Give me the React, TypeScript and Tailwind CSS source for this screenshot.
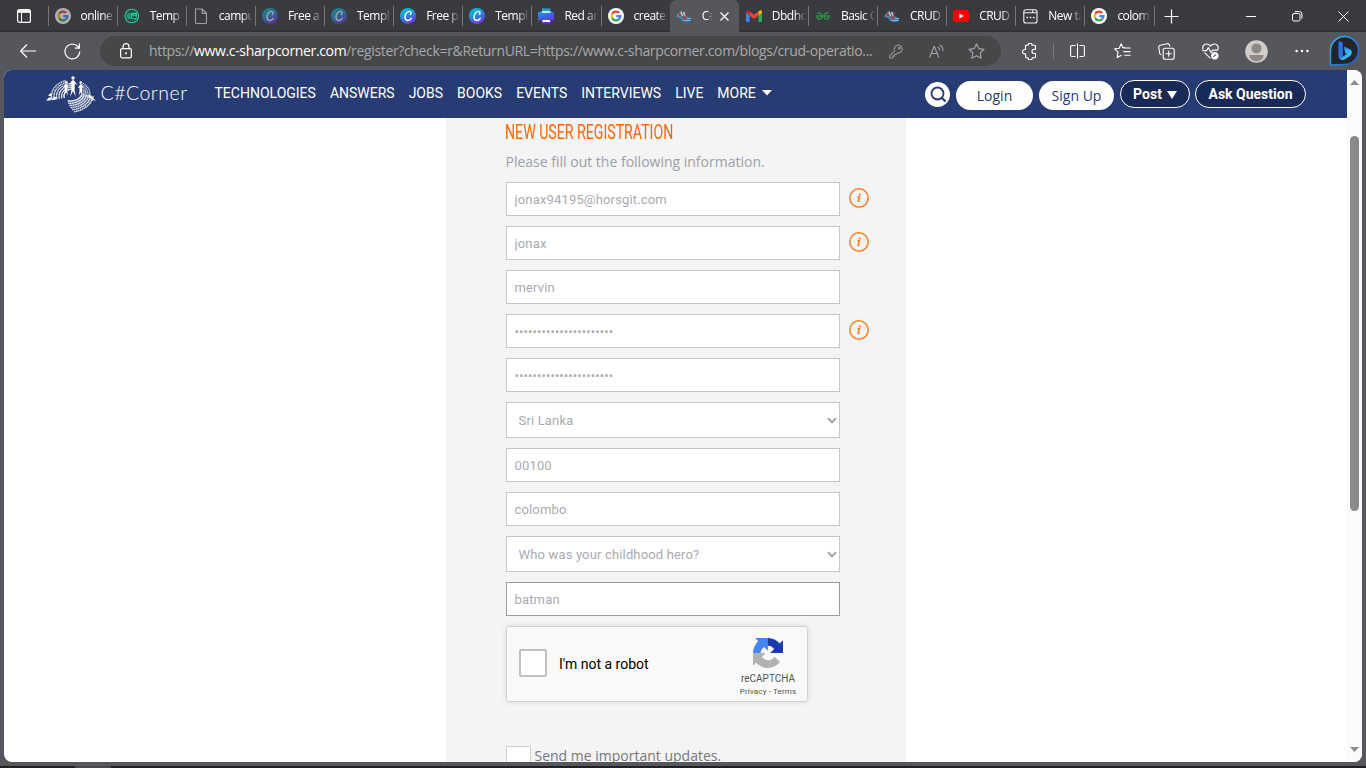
import React from "react";

const UI = "font-['Open_Sans','Noto_Sans',sans-serif]";

function GoogleIcon({ dim = false }: { dim?: boolean }) {
  return (
    <svg width="16" height="16" viewBox="0 0 16 16" className={dim ? "opacity-60" : ""}>
      <circle cx="8" cy="8" r="8" fill="#fff" />
      <g fill="none" strokeWidth="2.3">
        <path d="M11.2 4.9A4.4 4.4 0 0 0 4.2 5.8" stroke="#ea4335" />
        <path d="M4.2 5.8A4.4 4.4 0 0 0 4.2 10.2" stroke="#fbbc05" />
        <path d="M4.2 10.2A4.4 4.4 0 0 0 10.8 11.4" stroke="#34a853" />
        <path d="M10.8 11.4A4.4 4.4 0 0 0 12.4 8.2H8.2" stroke="#4285f4" />
      </g>
    </svg>
  );
}

function TempIcon() {
  return (
    <svg width="17" height="16" viewBox="0 0 17 16" fill="none" stroke="#1fd3a0" strokeWidth="1.2">
      <circle cx="8.3" cy="8" r="7.2" fill="#2a4a48" />
      <path d="M3.500 6h3.500M2.500 8h4.200M3.500 10h3.500M8.200 5.200h5v3.300M8 10.600V5.400l2.600 2.600 2.600-2.600M8 10.600h2M11 12l2.600-2.600" />
    </svg>
  );
}

function FileIcon() {
  return (
    <svg width="16" height="17" viewBox="0 0 16 17" fill="none" stroke="#a0a0a2" strokeWidth="1.1">
      <path d="M2.5 1h6.8l4.2 4.3v9.2q0 1-1 1h-9q-1 0-1-1zM9.2 1v4.4h4.3" />
    </svg>
  );
}

function CanvaIcon({ dim = false }: { dim?: boolean }) {
  return (
    <svg width="16" height="16" viewBox="0 0 16 16" className={dim ? "opacity-55" : ""}>
      <defs>
        <linearGradient id="canva" x1="0.2" y1="0" x2="0.7" y2="1">
          <stop offset="0" stopColor="#00c9d2" />
          <stop offset="0.5" stopColor="#2a86e0" />
          <stop offset="1" stopColor="#7a2be6" />
        </linearGradient>
      </defs>
      <circle cx="8" cy="8" r="8" fill="url(#canva)" />
      <path d="M10.400 6.400c1.100-1 .9-3.100-1-3-2.600.2-4.400 3.100-4.400 5.700 0 2.300 1.100 3.400 2.600 3.400 1.600 0 2.900-1 3.600-2.200" fill="none" stroke="#fff" strokeWidth="1.400" strokeLinecap="round" />
    </svg>
  );
}

function PrinterIcon() {
  return (
    <svg width="16" height="16" viewBox="0 0 16 16">
      <defs>
        <linearGradient id="printer" x1="0" y1="0" x2="0.3" y2="1">
          <stop offset="0" stopColor="#06c4d4" />
          <stop offset="0.55" stopColor="#2f6fe4" />
          <stop offset="1" stopColor="#7a2be6" />
        </linearGradient>
      </defs>
      <path d="M4 0.500h8.500v3h1.500q2 0 2 2v6q0 1-1 1h-2v3h-9v-3h-3q-1 0-1-1v-6q0-2 2-2h2z" fill="url(#printer)" />
      <path d="M4 3.300h8.500v1.500h-8.500zM4.500 12h7.500v2h-7.500z" fill="#fff" />
    </svg>
  );
}

function SharpIcon() {
  return (
    <svg width="16" height="14" viewBox="0 0 16 14">
      <path d="M0 7.500 2.500 4l3-2.500 1 2.500 2-1.500 2 1 .5 4-5 2.500z" fill="#7f9ab2" opacity=".75" />
      <path d="M3.500 7.500 6 7l5 .5 4.500 2-1 3-4 .8-5-1.800z" fill="#3f7fb0" />
      <path d="M3 4.500l1.500 2.500M9.500 3.500l1 3.500" stroke="#a3303a" strokeWidth="1.600" />
      <path d="M5 3l1.500 4M7.500 3 9 6.500" stroke="#b8cbdc" strokeWidth="1.100" />
      <path d="M7 7.500l3 2.500" stroke="#c9302c" strokeWidth="2" />
      <path d="M7 11.500h7M11 9.500h4" stroke="#86bbdf" strokeWidth=".8" />
    </svg>
  );
}

function GmailIcon() {
  return (
    <svg width="16" height="12" viewBox="0 0 16 12">
      <path d="M1 12q-1 0-1-1V2l3.600 2.700V12z" fill="#4285f4" />
      <path d="M15 12q1 0 1-1V2l-3.600 2.700V12z" fill="#34a853" />
      <path d="M0 2.500V1.800Q.3 0 2.200.400L3.600 1.400v4z" fill="#c5221f" />
      <path d="M16 2.500v-.700Q15.700 0 13.800.400l-1.400 1v4z" fill="#fbbc04" />
      <path d="M3.400 1.200 8 4.700l4.600-3.500v4.300L8 9 3.400 5.500z" fill="#ea4335" />
    </svg>
  );
}

function GeeksIcon() {
  return (
    <svg width="14" height="8" viewBox="0 0 14 8" fill="none" stroke="#2f8d46" strokeWidth="1.500">
      <path d="M1.500 1.300Q5.700 0 6 4M0 4h14M6 4Q5.900 7.200 3.400 7.200 1.200 7.200 1 4.200M12.500 1.300Q8.300 0 8 4M8 4Q8.100 7.200 10.600 7.200 12.800 7.200 13 4.200" />
    </svg>
  );
}

function YoutubeIcon() {
  return (
    <svg width="16" height="12" viewBox="0 0 16 12">
      <rect width="16" height="12" rx="3" fill="#f00" />
      <path d="M6.300 3.400v5.200L10.800 6z" fill="#fff" />
    </svg>
  );
}

function NewTabIcon() {
  return (
    <svg width="15" height="15" viewBox="0 0 15 15" fill="none" stroke="#f2f2f2" strokeWidth="1.100">
      <path d="M.8 3.800h7.700q1 0 1.200-1l.3-1.800M.8 12V3q0-2.200 2.200-2.200h8.800q2.200 0 2.200 2.200v9q0 2-2 2h-9.200q-2 0-2-2zM9.500 3.800h4.500" />
      <path d="M3.500 8.500h1.600M6.700 8.500h1.600M9.900 8.500h1.600" strokeWidth="1.600" />
    </svg>
  );
}

const tabs: { label: string; icon: React.ReactNode; active?: boolean }[] = [
  { label: "online", icon: <GoogleIcon dim /> },
  { label: "Temp", icon: <TempIcon /> },
  { label: "campu", icon: <FileIcon /> },
  { label: "Free a", icon: <CanvaIcon dim /> },
  { label: "Templ", icon: <CanvaIcon dim /> },
  { label: "Free p", icon: <CanvaIcon /> },
  { label: "Templ", icon: <CanvaIcon /> },
  { label: "Red an", icon: <PrinterIcon /> },
  { label: "create", icon: <GoogleIcon /> },
  { label: "C#", icon: <SharpIcon />, active: true },
  { label: "Dbdho", icon: <GmailIcon /> },
  { label: "Basic C", icon: <GeeksIcon /> },
  { label: "CRUD", icon: <SharpIcon /> },
  { label: "CRUD", icon: <YoutubeIcon /> },
  { label: "New ta", icon: <NewTabIcon /> },
  { label: "colom", icon: <GoogleIcon /> },
];

function TabStrip() {
  return (
    <div className="flex h-8 bg-[#3a3b3e] text-white shadow-[inset_0_-2px_2px_-1px_#2c2d30]">
      <div className="flex w-[47.500px] shrink-0 items-center pl-[17px]">
        <svg width="14" height="14" viewBox="0 0 14 14" fill="none" stroke="#fff">
          <rect x=".6" y=".6" width="12.800" height="12.800" rx="2" strokeWidth="1.200" />
          <path d="M1 2.500h12" strokeWidth="2.600" />
          <path d="M4.500 3v10" strokeWidth="1" />
        </svg>
      </div>
      <div className="grid w-[1106px] shrink-0 grid-cols-16">
        {tabs.map((t, i) => (
          <div key={i} className={t.active ? "flex items-center rounded-t-md bg-[#56575c] pl-[6px]" : "flex items-center"}>
            {!t.active && <div className={tabs[i - 1]?.active ? "h-5 w-px shrink-0" : "h-5 w-px shrink-0 bg-[#76777a]"} />}
            <div className={t.active ? "flex w-4 shrink-0 justify-center" : "ml-[6px] flex w-4 shrink-0 justify-center"}>{t.icon}</div>
            <div
              className={
                t.active
                  ? "ml-[10px] w-[10px] overflow-hidden whitespace-nowrap text-[12px] leading-4 [mask-image:linear-gradient(to_right,black_55%,transparent)]"
                  : "ml-[10px] w-[34px] overflow-hidden whitespace-nowrap text-[12px] leading-4 tracking-[-0.5px] [mask-image:linear-gradient(to_right,black_65%,transparent)]"
              }
            >
              {t.label}
            </div>
            {t.active && (
              <svg className="ml-2" width="9" height="9" viewBox="0 0 9 9" stroke="#fff" strokeWidth="1.200">
                <path d="M.5.5l8 8M8.500.5l-8 8" />
              </svg>
            )}
          </div>
        ))}
      </div>
      <div className="flex flex-1 items-center">
        <div className="h-5 w-px bg-[#76777a]" />
        <svg className="ml-[9.500px]" width="15" height="15" viewBox="0 0 15 15" stroke="#fff" strokeWidth="1.200">
          <path d="M7.500.5v14M.5 7.500h14" />
        </svg>
        <svg className="ml-[67px]" width="11" height="11" viewBox="0 0 11 11" stroke="#fff">
          <path d="M0 5.500h10" />
        </svg>
        <svg className="ml-[35px]" width="11" height="11" viewBox="0 0 11 11" fill="none" stroke="#fff">
          <rect x=".5" y="2.500" width="7.500" height="7.500" rx="1.500" />
          <path d="M2.800.6h4.700q2.400 0 2.400 2.400v4.700" />
        </svg>
        <svg className="ml-[35px]" width="11" height="11" viewBox="0 0 11 11" stroke="#fff">
          <path d="M.5.5l10 10M10.500.5l-10 10" />
        </svg>
      </div>
    </div>
  );
}

function BingIcon() {
  return (
    <svg width="31" height="32" viewBox="0 0 31 32">
      <defs>
        <linearGradient id="ring" x1="0" y1="0" x2="1" y2="1">
          <stop offset="0" stopColor="#35b8f2" />
          <stop offset="1" stopColor="#1855d6" />
        </linearGradient>
        <linearGradient id="bing" x1="0" y1="0" x2="1" y2="1">
          <stop offset="0" stopColor="#2d7df0" />
          <stop offset="1" stopColor="#42d3f2" />
        </linearGradient>
      </defs>
      <path d="M1.500 30V15.500A14 14 0 1 1 15.500 29.500Q9 29.500 1.500 30z" fill="#242527" stroke="url(#ring)" strokeWidth="1.600" />
      <path d="M9.500 6 13.800 7.600v13.500l-.5 3.900q-3.800-.6-3.800-4z" fill="#2a71ea" />
      <path d="M15 11.500l6.200 3q2.300 1.600 1.300 4.300-.5 1.500-2 2.500l-4.800 3.200q-2.900 1.300-4.700-.7l6.500-4.800-1.500-1.500z" fill="url(#bing)" />
    </svg>
  );
}

function Toolbar() {
  return (
    <div className="flex h-[38px] items-center bg-[#56575c] text-white">
      <svg className="ml-5 shrink-0" width="16" height="14" viewBox="0 0 16 14" fill="none" stroke="#fff" strokeWidth="1.200">
        <path d="M7 .5.7 7 7 13.500M.7 7H16" />
      </svg>
      <svg className="ml-7 shrink-0" width="17" height="17" viewBox="0 0 17 17" fill="none" stroke="#fff" strokeWidth="1.200">
        <path d="M15.800 8.500A7.400 7.400 0 1 1 13 2.700l2 2M15.400.5v4.600h-4.600" />
      </svg>
      <div className="ml-[19px] flex h-[30px] w-[901px] shrink-0 items-center rounded-full bg-[#464749] text-[#a8a9ab]">
        <svg className="ml-[20px] shrink-0" width="12" height="16" viewBox="0 0 12 16" fill="none" stroke="#fff" strokeWidth="1.200">
          <rect x=".6" y="5.600" width="10.800" height="9.200" rx="1.500" />
          <path d="M3 5.500V3.600a3 3 0 0 1 6 0v1.900" />
          <circle cx="6" cy="10.200" r="1" fill="#fff" stroke="none" />
        </svg>
        <div className="ml-[17px] w-[740px] whitespace-nowrap text-[14px] leading-5">
          <span className="tracking-[-0.345px]">
            https://<span className="text-white">www.c-sharpcorner.com</span>/register?check=r&amp;ReturnURL=https://www.c-sharpcorner.com/blogs/crud-operatio...
          </span>
        </div>
        <svg className="shrink-0" width="14" height="15" viewBox="0 0 14 15" fill="none" stroke="#929395" strokeWidth="1.100">
          <path d="M5.600 6.800A4 4 0 1 1 8.400 9L7 10.400H5.500v1.700H3.700V14H.8v-2.400z" />
          <circle cx="10.300" cy="4.200" r=".9" />
        </svg>
        <svg className="ml-[26px] shrink-0" width="16" height="15" viewBox="0 0 16 15" fill="none" stroke="#a6a7a9" strokeWidth="1.100">
          <path d="M.6 13.500 5 2.500h.4l4.400 11M2.200 9.500h6M8.800 3q2 1.200 1.700 3.500M10.800 1q3.600 2 3 6" />
        </svg>
        <svg className="ml-[23px] shrink-0" width="17" height="16" viewBox="0 0 17 16" fill="none" stroke="#a6a7a9" strokeWidth="1.100" strokeLinejoin="round">
          <path d="m8.500.9 2.300 4.700 5.200.8-3.800 3.600.9 5.200-4.600-2.400-4.600 2.400.9-5.200L1 6.400l5.200-.8z" />
        </svg>
      </div>
      <svg className="ml-[21px] shrink-0" width="15" height="17" viewBox="0 0 15 17" fill="none" stroke="#fff" strokeWidth="1.100" strokeLinejoin="round">
        <path d="M3.500 2.200h2.600a2 2 0 0 1 4 0h2.400q1 0 1 1v3h-1.400a2.100 2.100 0 0 0 0 4.300h1.400v3.200q0 1-1 1h-2.200a2.100 2.100 0 0 1-4.300 0H4.600q-1 0-1-1v-2.800H2.700a2.100 2.100 0 0 1 0-4.400h.8z" />
      </svg>
      <div className="ml-[16px] h-4 w-px shrink-0 bg-[#77787b]" />
      <svg className="ml-[16px] shrink-0" width="15" height="16" viewBox="0 0 15 16" fill="none" stroke="#fff" strokeWidth="1.100">
        <path d="M7.500.5v15M5.500 2.500H2q-1.400 0-1.400 1.400v8.200q0 1.400 1.400 1.400h3.500M9.500 2.500H13q1.400 0 1.400 1.400v8.200q0 1.400-1.400 1.400H9.500" />
      </svg>
      <svg className="ml-[29px] shrink-0" width="17" height="16" viewBox="0 0 17 16" fill="none" stroke="#fff" strokeWidth="1.100" strokeLinejoin="round">
        <path d="M10.600 4.500 8.800 4.600 7.200.8 5.200 5.200.7 5.800l3.300 3.300-.8 5.400 4.300-2.200M9.800 5h6.700M9.200 8.600h7.300M10.200 12.300h6.300" />
      </svg>
      <svg className="ml-[27px] shrink-0" width="17" height="17" viewBox="0 0 17 17" fill="none" stroke="#fff" strokeWidth="1.100" strokeLinejoin="round">
        <rect x="5.200" y="5.200" width="11" height="11" rx="2" />
        <path d="M10.700 7.800v6M7.700 10.800h6M3.300 11.800q-1.200-.2-1.600-1.500L.8 4.500Q.6 2.700 2.200 2.300l7-1.600q1.800-.2 2.300 1.300l.4 1.400" />
      </svg>
      <svg className="ml-[27px] shrink-0" width="17" height="17" viewBox="0 0 17 17" fill="none" stroke="#fff" strokeWidth="1.100" strokeLinejoin="round">
        <path d="M1 6.600Q0 2.400 3.200 1.200 6.500.3 8.500 3.200 10.500.3 13.800 1.200 17 2.400 16 6.600M.5 7.600h4l1.800-3 2.600 5 1.700-2.500h5.500M2.500 9.600l6 5.700" />
        <circle cx="12.800" cy="12.800" r="3.700" fill="#fff" stroke="none" />
        <path d="m11.200 13.800 3-2.500" stroke="#56575c" />
      </svg>
      <svg className="ml-[26px] shrink-0" width="23" height="23" viewBox="0 0 23 23">
        <circle cx="11.500" cy="11.500" r="11.300" fill="#d0cdca" />
        <circle cx="11.500" cy="8.400" r="5" fill="#8e8984" />
        <path d="M4.200 15h14.600q-.7 6-7.300 6.300Q4.900 21 4.200 15z" fill="#8e8984" />
      </svg>
      <svg className="ml-[27px] shrink-0" width="14" height="4" viewBox="0 0 14 4" fill="#fff">
        <circle cx="1.600" cy="2" r="1.200" />
        <circle cx="7" cy="2" r="1.200" />
        <circle cx="12.400" cy="2" r="1.200" />
      </svg>
      <div className="ml-[20px] shrink-0">
        <BingIcon />
      </div>
    </div>
  );
}

function LogoMark() {
  const dots: React.ReactNode[] = [];
  const arc = (id: string, cx: number, cy: number, rx: number, ry: number, from: number, to: number, n: number, size: number) => {
    for (let k = 0; k <= n; k++) {
      const a = ((from + ((to - from) * k) / n) * Math.PI) / 180;
      dots.push(<circle key={`${id}-${k}`} cx={(cx + rx * Math.cos(a)).toFixed(2)} cy={(cy + ry * Math.sin(a)).toFixed(2)} r={size} />);
    }
  };
  for (let r = 0; r < 6; r++) {
    arc(`left${r}`, 27, 20, 9 + r * 2.5, 7 + r * 1.9, 168, 268 - r * 4, 15, 0.78);
    arc(`low${r}`, 24, 17, 12 + r * 2.3, 8 + r * 2.2, 12, 98 - r * 4, 13, 0.9);
  }
  for (let r = 0; r < 4; r++) {
    arc(`right${r}`, 24, 18, 14 + r * 2, 9 + r * 1.7, -48, 14, 9, 0.7);
  }
  return (
    <svg width="50" height="38" viewBox="0 0 50 38" fill="#fff">
      <g opacity=".85">{dots}</g>
      <circle cx="27" cy="2" r="1.700" />
      <circle cx="20" cy="6.500" r="1.300" />
      <circle cx="34.700" cy="6.500" r="1.300" />
      <path d="M26.200 4.200h1.600l3.700 4.800-2.700-1.200-.2 6 1.200 7.200L27 15l-2.800 6 1.200-7.200-.2-6L22.500 9zM19.500 8.200h1.100l2.400 3.600-1.800-.7v4l.8 5-2-4-2.800 4.500 1.500-5.500v-4l-1.900.8zM34.200 8.200h1.100l2.600 3.600-1.900-.7v4l.8 4.500-2.100-3.300-2 3.300.8-4.500v-4l-1.800.8z" />
      <path d="M0 24.500l3-3h3.500l-2.500 3zM5.500 24l2.500-3h3l-2 3zM2 20l2-2.500h2.500l-1.500 2.500zM43 18l7 7-3.500-1.300-4-3.700z" />
    </svg>
  );
}

function SiteHeader() {
  return (
    <header className="flex h-12 shrink-0 bg-[#273c75] font-['Roboto',sans-serif] text-white">
      <div className="ml-[42px] mt-[6px] w-[50px] shrink-0">
        <LogoMark />
      </div>
      <div className="ml-[4.500px] w-[114px] shrink-0 whitespace-nowrap pt-[11px] font-['Lato',sans-serif] text-[19.500px] font-light leading-6 tracking-[0.5px]">C#Corner</div>
      <nav className="flex w-[710.500px] shrink-0 gap-[14px] whitespace-nowrap pt-[13px] text-[14px] leading-5">
        {["TECHNOLOGIES", "ANSWERS", "JOBS", "BOOKS", "EVENTS", "INTERVIEWS", "LIVE"].map((n) => (
          <a key={n}>{n}</a>
        ))}
        <a className="flex">
          MORE
          <svg className="ml-[6px] mt-[7px]" width="10" height="6" viewBox="0 0 10 6" fill="#fff">
            <path d="M0 0h10L5 5.500z" />
          </svg>
        </a>
      </nav>
      <div className="mt-[12px] flex size-[25px] shrink-0 items-center justify-center rounded-full bg-white">
        <svg className="ml-px" width="17" height="17" viewBox="0 0 17 17" fill="none" stroke="#273c75" strokeWidth="1.800">
          <circle cx="7.500" cy="7.500" r="6" />
          <path d="m11.800 11.800 3.700 3.700" strokeWidth="2.200" />
        </svg>
      </div>
      <div className="ml-[6px] mt-[11px] flex h-[29px] w-[77px] shrink-0 items-center justify-center rounded-full bg-white font-['Open_Sans',sans-serif] text-[14px] text-[#273c75]">Login</div>
      <div className="ml-[6px] mt-[11px] flex h-[29px] w-[75px] shrink-0 items-center justify-center rounded-full bg-white font-['Open_Sans',sans-serif] text-[14px] text-[#273c75]">Sign Up</div>
      <div className="ml-[6px] mt-[10px] flex h-7 w-[70px] shrink-0 items-center justify-center rounded-full border border-white bg-[#192a56] text-[14px] font-bold">
        Post
        <svg className="ml-[5px]" width="10" height="9" viewBox="0 0 10 9" fill="#fff">
          <path d="M0 1h10L5 9z" />
        </svg>
      </div>
      <div className="ml-[5px] mt-[10px] flex h-7 w-[111px] shrink-0 items-center justify-center rounded-full border border-white bg-[#192a56] text-[14px] font-bold">Ask Question</div>
    </header>
  );
}

function InfoIcon() {
  return (
    <svg className="ml-[9px] mt-[6px]" width="20" height="20" viewBox="0 0 20 20" fill="none" stroke="#ff7a1f">
      <circle cx="10" cy="10" r="9.200" strokeWidth="1.500" />
      <path d="M8.600 8.700h1.700l-1.100 4.300q0 .9 1.500.1" strokeWidth="1.600" />
      <circle cx="10.800" cy="6.500" r="1.100" fill="#ff7a1f" stroke="none" />
    </svg>
  );
}

function Field({ value, info, password, focus }: { value: string; info?: boolean; password?: boolean; focus?: boolean }) {
  return (
    <div className="flex">
      <input
        readOnly
        type={password ? "password" : "text"}
        defaultValue={value}
        className={`h-[34px] w-[334px] border bg-white px-[7.500px] pt-px text-[13px] text-[#a9aab0] outline-none ${focus ? "border-[#9b9b9b]" : "border-[#c6c6c6]"} ${password ? "tracking-[0.1px]" : "tracking-[0.16px]"}`}
      />
      {info && <InfoIcon />}
    </div>
  );
}

function SelectField({ value }: { value: string }) {
  return (
    <div className="flex h-9 w-[334px] items-center justify-between border border-[#c6c6c6] bg-white pl-[11.500px] pr-[2px] text-[13px] tracking-[0.16px] text-[#a9aab0]">
      <span className="pt-[2px]">{value}</span>
      <svg width="10" height="7" viewBox="0 0 10 7" fill="none" stroke="#a5a5aa" strokeWidth="2">
        <path d="m1 1.300 4 4 4-4" />
      </svg>
    </div>
  );
}

function Recaptcha() {
  return (
    <div className="flex h-[76px] w-[302px] shrink-0 rounded-[3px] border border-[#d3d3d3] bg-[#f9f9f9] shadow-[0_0_4px_1px_rgba(0,0,0,0.08)]">
      <div className="ml-[12px] mt-[22px] size-7 shrink-0 rounded-[2px] border-2 border-[#c1c1c1] bg-white" />
      <div className="ml-[12px] w-[173px] shrink-0 pt-[27px] text-[14px] leading-5 tracking-[-0.01px] text-black">I'm not a robot</div>
      <div className="flex w-[72px] shrink-0 flex-col items-center whitespace-nowrap text-[#555]">
        <svg className="mt-[11px]" width="30" height="30" viewBox="0 0 64 64">
          <path d="M64 31.955l-.033-1.370V4.687l-7.160 7.160C50.948 4.674 42.033.093 32.050.093c-10.400 0-19.622 4.960-25.458 12.640l11.736 11.860a15.550 15.550 0 0 1 4.754-5.334c2.050-1.600 4.952-2.906 8.968-2.906.485 0 .86.057 1.135.163 4.976.393 9.288 3.140 11.828 7.124l-8.307 8.307L64 31.953" fill="#1c3aa9" />
          <path d="M31.862.094l-1.370.033H4.594l7.160 7.160C4.580 13.147 0 22.060 0 32.046c0 10.400 4.960 19.622 12.640 25.458L24.500 45.768a15.550 15.550 0 0 1-5.334-4.754c-1.600-2.050-2.906-4.952-2.906-8.968 0-.485.057-.86.163-1.135.393-4.976 3.140-9.288 7.124-11.828l8.307 8.307L31.860.095" fill="#4285f4" />
          <path d="M.001 32.045l.033 1.370v25.898l7.160-7.160c5.860 7.173 14.774 11.754 24.760 11.754 10.400 0 19.622-4.960 25.458-12.640l-11.736-11.860a15.550 15.550 0 0 1-4.754 5.334c-2.050 1.600-4.952 2.906-8.968 2.906-.485 0-.86-.057-1.135-.163-4.976-.393-9.288-3.140-11.828-7.124l8.307-8.307c-10.522.04-22.400.066-27.295-.005" fill="#b2b2b2" />
        </svg>
        <div className="mt-[5px] text-[10px] leading-[12px]">reCAPTCHA</div>
        <div className="mt-[2px] text-[8px] leading-[10px] tracking-[0.14px]">Privacy - Terms</div>
      </div>
    </div>
  );
}

export default function App() {
  return (
    <div className={`flex h-[768px] w-[1366px] flex-col overflow-hidden bg-[#56575c] ${UI}`}>
      <TabStrip />
      <Toolbar />
      <div className="mx-1 flex h-[692px] shrink-0 overflow-hidden rounded-[8px] bg-white">
        <div className="flex w-[1343px] shrink-0 flex-col">
          <SiteHeader />
          <main className="ml-[442px] flex h-[644px] w-[460px] flex-col overflow-hidden bg-[#f4f4f4] pl-[60px] font-['Roboto',sans-serif]">
            <h1 className="-ml-[1px] h-[29px] w-[252px] shrink-0 origin-left scale-x-[0.69] whitespace-nowrap text-[20.500px] leading-[28px] text-[#ff6600]">NEW USER REGISTRATION</h1>
            <p className="-ml-[0.500px] mt-[5px] h-5 shrink-0 whitespace-nowrap font-['Open_Sans',sans-serif] text-[14px] leading-5 text-[#9aa0ae]">Please fill out the following information.</p>
            <div className="mt-[10px] flex shrink-0 flex-col gap-[10px]">
              <Field value="jonax94195@horsgit.com" info />
              <Field value="jonax" info />
              <Field value="mervin" />
              <Field value="aaaaaaaaaaaaaaaaaaaaaa" password info />
              <Field value="aaaaaaaaaaaaaaaaaaaaaa" password />
              <SelectField value="Sri Lanka" />
              <Field value="00100" />
              <Field value="colombo" />
              <SelectField value="Who was your childhood hero?" />
              <Field value="batman" focus />
              <Recaptcha />
            </div>
            <div className="mt-[44px] flex shrink-0">
              <div className="size-[25px] border border-[#d0d0d0] bg-white" />
              <div className="ml-[3.500px] whitespace-nowrap font-['Open_Sans',sans-serif] text-[14px] leading-5 text-[#777]">Send me important updates.</div>
            </div>
          </main>
        </div>
        <div className="flex w-[15px] shrink-0 flex-col items-center bg-[#fbfbfb] pt-[10px]">
          <svg width="9" height="5" viewBox="0 0 9 5" fill="#8a8a8a">
            <path d="M0 5h9L4.500 0z" />
          </svg>
          <div className="mt-[51px] h-[375px] w-[9px] rounded-full bg-[#8a8a8a]" />
          <svg className="mt-[236px]" width="9" height="5" viewBox="0 0 9 5" fill="#8a8a8a">
            <path d="M0 0h9L4.500 5z" />
          </svg>
        </div>
      </div>
      <div className="mt-1 flex h-[2px] bg-[#202124]">
        <div className="ml-[75px] w-9 bg-[#4a4a4e]" />
      </div>
    </div>
  );
}
